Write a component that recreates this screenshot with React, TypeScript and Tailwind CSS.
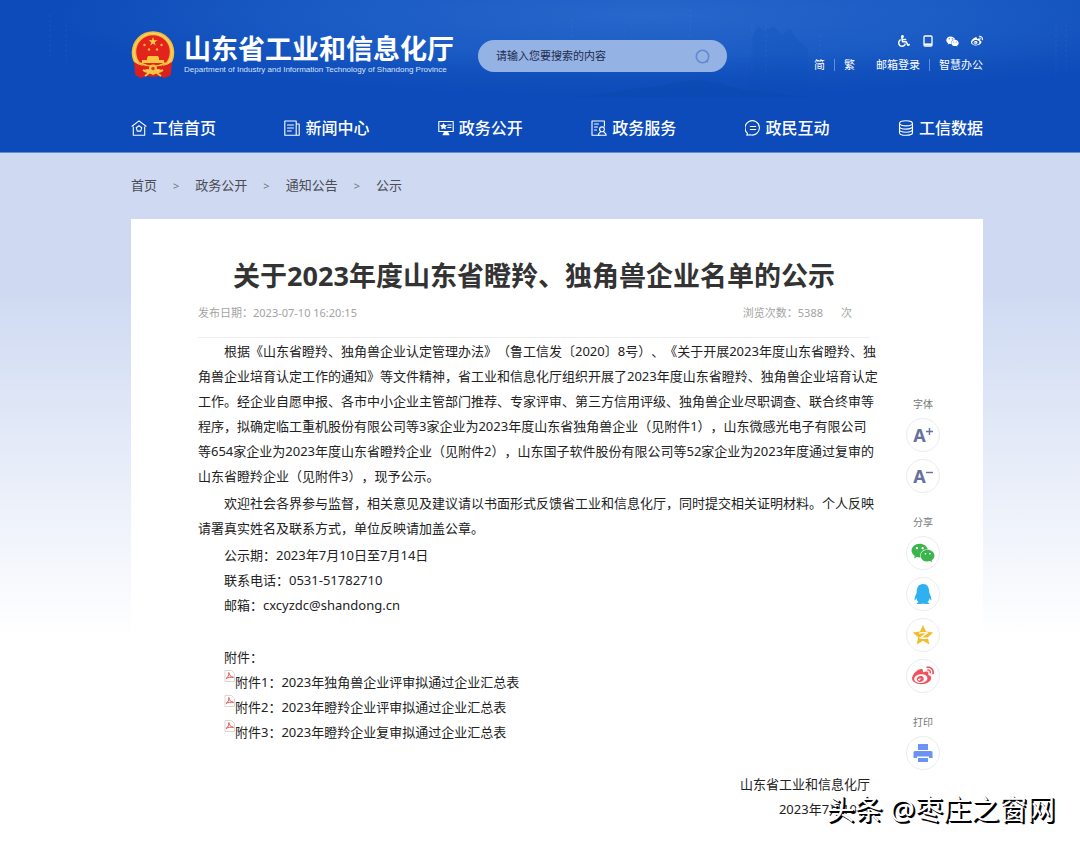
import type { ReactNode } from 'react';
import { FaWeixin, FaWheelchair, FaWeibo, FaQq } from 'react-icons/fa';

const line = { fill: 'none', stroke: 'currentColor', strokeWidth: 1.1, strokeLinejoin: 'round', strokeLinecap: 'round' } as const;

const navItems: { label: string; icon: ReactNode }[] = [
  {
    label: '工信首页',
    icon: (
      <>
        <path d="M1 6.2 8 .9l7 5.3M2.3 7v8.3h11.4V7" />
        <path d="m8 5.7 2.8 2-1.1 3.4H6.3L5.2 7.7z" />
      </>
    ),
  },
  {
    label: '新闻中心',
    icon: (
      <>
        <path d="M.8 1h11.4v14.2H.8zM12.2 4h3v11.2h-3" />
        <path d="M3.5 5h6M3.5 8h6M3.5 11h3.8" />
      </>
    ),
  },
  {
    label: '政务公开',
    icon: (
      <>
        <path d="M.8 1.5h14.4v10H.8zM9.8 5H13M9.8 7.5H13M5 14.7h6" />
        <path d="M6.5 12h3l1 2.5h-5zM5.5 3.8l.8 1.6 1.8.2-1.3 1.2.4 1.8-1.7-.9-1.6.9.3-1.8-1.3-1.2 1.8-.2z" fill="currentColor" />
      </>
    ),
  },
  {
    label: '政务服务',
    icon: (
      <>
        <path d="M8 15.2H1V1h12.4v5.3M3.5 4h4M3.5 7h3M3.5 10h2" />
        <circle cx="11" cy="9.3" r="2.4" />
        <path d="M9.6 11.3c0 1.6-2.2 1.2-2.2 3.9h7.8c0-2.7-2.6-2.3-2.6-3.9" />
      </>
    ),
  },
  {
    label: '政民互动',
    icon: (
      <>
        <path d="M2.5 13.3A7.2 7.2 0 1 1 5 14.7L1.8 15.2z" />
        <path d="M5.3 6.5h5.4M5.3 9.5h5.4" />
      </>
    ),
  },
  {
    label: '工信数据',
    icon: (
      <>
        <ellipse cx="8" cy="3.3" rx="6.5" ry="2.6" />
        <path d="M1.5 3.3v9.4c0 1.5 3 2.6 6.5 2.6s6.5-1.1 6.5-2.6V3.3M1.5 6.5c0 1.5 3 2.6 6.5 2.6s6.5-1.1 6.5-2.6M1.5 9.6c0 1.5 3 2.6 6.5 2.6s6.5-1.1 6.5-2.6" />
      </>
    ),
  },
];

const crumbs = ['首页', '政务公开', '通知公告', '公示'];

const attachments = [
  '附件1：2023年独角兽企业评审拟通过企业汇总表',
  '附件2：2023年瞪羚企业评审拟通过企业汇总表',
  '附件3：2023年瞪羚企业复审拟通过企业汇总表',
];

function Emblem() {
  return (
    <svg viewBox="0 0 44 47" className="h-[47px] w-11 shrink-0" aria-hidden="true">
      <path d="M6 32 4 44l6 3 6-2 6 1 6-1 6 2 6-3-2-12z" fill="#d9201c" />
      <circle cx="22" cy="21.5" r="21.3" fill="#f6bd3d" />
      <circle cx="22" cy="21.5" r="19" fill="none" stroke="#fbd978" strokeWidth="1" />
      <circle cx="22" cy="21" r="16.8" fill="#e3241d" />
      <path d="m22 6 1.1 3.2h3.3l-2.7 2 1 3.2-2.7-1.9-2.7 1.900 1-3.200-2.700-2h3.300z" fill="#fbd13f" />
      <g fill="#fbb83a">
        <circle cx="13.5" cy="14" r="1.2" />
        <circle cx="30.5" cy="14" r="1.2" />
        <circle cx="18" cy="18.5" r="1.2" />
        <circle cx="26" cy="18.5" r="1.2" />
      </g>
      <path d="M17 25h10l1 2v2h5v3H11v-3h5v-2z" fill="#fbc540" />
      <path d="M3 31c6 4 12 5 19 5s13-1 19-5l-1 11-7-2-5-2H16l-5 2-7 2z" fill="#dd211c" />
      <path d="M9 32c8 4 18 4 26 0" fill="none" stroke="#f9c644" strokeWidth="1.6" />
      <circle cx="22" cy="37.5" r="4" fill="#f6c245" />
      <circle cx="22" cy="37.5" r="1.7" fill="#de3a1e" />
      <path d="m12 39 6 2 4 2 4-2 6-2M14 45l4-3M30 45l-4-3" fill="none" stroke="#f9c644" strokeWidth="1.8" />
    </svg>
  );
}

function HeaderBackdrop() {
  return (
    <svg className="absolute inset-0 h-full w-full" viewBox="0 0 1080 153" preserveAspectRatio="none" aria-hidden="true">
      <defs>
        <radialGradient id="glow" cx="0.6" cy="0.1" r="0.55">
          <stop offset="0" stopColor="#2868cb" />
          <stop offset="0.5" stopColor="#1f60c8" stopOpacity="0.8" />
          <stop offset="1" stopColor="#2565c9" stopOpacity="0" />
        </radialGradient>
        <linearGradient id="fade" x1="0" y1="0" x2="0" y2="1">
          <stop offset="0.35" stopColor="#0c4bb9" stopOpacity="0" />
          <stop offset="0.7" stopColor="#0c4bb9" />
        </linearGradient>
      </defs>
      <rect width="1080" height="153" fill="url(#glow)" />
      <path d="M748 92l4-55 6-10 6 4 10-4 8 8 8-6 8 12 10 8v43z" fill="#0d4fb8" opacity="0.25" />
      <g stroke="#6aa2ea" strokeWidth="1" strokeDasharray="2 3" opacity="0.16">
        <path d="M572 20v50M624 30v55M690 10v60M752 25v55M766 25v55M820 35v45M1056 25v60M1066 25v60M50 15v45M66 25v40" />
      </g>
      <rect width="1080" height="153" fill="url(#fade)" />
      <path d="M570 98c30-2 60-10 80-10 20-2 30-8 50-7 20 0 25 8 50 10 20 2 40 5 60 7z" fill="#0a47ad" opacity="0.45" />
    </svg>
  );
}

function PdfIcon() {
  return (
    <svg viewBox="0 0 11 12" className="h-3 w-[11px] shrink-0" aria-hidden="true">
      <path d="M1 .5h6.5l3 3v8H1z" fill="#fff" stroke="#d5c9c9" strokeWidth="0.8" />
      <path d="M2 8.5c2.5-1.5 3-4 2.8-6 .5 3 2 4.5 4.7 4.8-3-.3-5.5 0-7.5 1.2z" fill="none" stroke="#e04848" strokeWidth="0.9" />
    </svg>
  );
}

function QzoneIcon() {
  return (
    <svg viewBox="0 0 22 22" className="h-[22px] w-[22px]" aria-hidden="true">
      <path d="m11 1 3 6.6 7.2.8-5.4 4.9 1.5 7.1-6.3-3.6-6.3 3.6 1.5-7.1L.8 8.4 8 7.6z" fill="#f2bd2c" />
      <path d="M7 9.3c2.5-.8 5-.9 8-.3l-6.5 4.7c3 .8 5.5.8 8.5.2" fill="none" stroke="#fff" strokeWidth="1.4" />
    </svg>
  );
}

function PrintIcon() {
  return (
    <svg viewBox="0 0 20 20" className="h-5 w-5" fill="#6a93f3" aria-hidden="true">
      <path d="M5 1h10v6H5zM2 8h16a1.500 1.500 0 0 1 1.500 1.500V15h-3.500v-1.500H4V15H.5V9.500A1.500 1.500 0 0 1 2 8zM5 15h10v4H5z" />
    </svg>
  );
}

function LetterIcon({ minus = false }: { minus?: boolean }) {
  return (
    <span className="flex items-start text-[18px] leading-5 font-bold text-[#66719c]">
      A
      <svg viewBox="0 0 8 8" className="mt-[3px] h-[7px] w-[7px]" stroke="currentColor" strokeWidth="1.6" aria-hidden="true">
        <path d={minus ? 'M0 4h8' : 'M0 4h8M4 0v8'} />
      </svg>
    </span>
  );
}

const toolGroups: { title: string; tools: { label: string; icon: ReactNode }[] }[] = [
  {
    title: '字体',
    tools: [
      { label: '放大字体', icon: <LetterIcon /> },
      { label: '缩小字体', icon: <LetterIcon minus /> },
    ],
  },
  {
    title: '分享',
    tools: [
      { label: '微信', icon: <FaWeixin className="h-6 w-6 text-[#3cb64c]" /> },
      { label: 'QQ', icon: <FaQq className="h-5 w-5 text-[#2fb0f0]" /> },
      { label: 'QQ空间', icon: <QzoneIcon /> },
      { label: '微博', icon: <FaWeibo className="h-[22px] w-[22px] text-[#f2505c]" /> },
    ],
  },
  { title: '打印', tools: [{ label: '打印', icon: <PrintIcon /> }] },
];

function Header() {
  return (
    <header className="relative border-b border-[#5f8ed8] bg-[#0c4bb9] text-white">
      <HeaderBackdrop />
      <div className="relative pr-[97px] pl-[131px]">
        <div className="flex h-[103px] items-start pt-[31px]">
          <Emblem />
          <div className="ml-[9px] shrink-0 pt-px">
            <div className="text-[27px] leading-[34px] font-bold whitespace-nowrap">山东省工业和信息化厅</div>
            <div className="font-['Liberation_Sans',sans-serif] text-[8px] leading-[8px] whitespace-nowrap text-[#d5e3fa]">
              Department of Industry and Information Technology of Shandong Province
            </div>
          </div>
          <form className="mt-[9px] ml-6 flex h-8 w-[249px] items-center rounded-full bg-[#95b2e4] pr-[17px] pl-[18px]">
            <input
              type="text"
              aria-label="搜索"
              placeholder="请输入您要搜索的内容"
              className="min-w-0 flex-1 bg-transparent text-[11px] text-[#1c2b4d] outline-none placeholder:text-[#1c2b4d]"
            />
            <button type="button" aria-label="搜索" className="text-[#5f8ad2]">
              <svg viewBox="0 0 15 15" className="h-[15px] w-[15px]" fill="none" stroke="currentColor" strokeWidth="1.6">
                <circle cx="7.5" cy="7.5" r="6.2" />
                <path d="m11.5 11.5 1.6 1.6" />
              </svg>
            </button>
          </form>
          <div className="ml-auto flex flex-col items-end">
            <div className="mt-1 flex h-3 items-center gap-3">
              <a href="#" aria-label="无障碍"><FaWheelchair className="h-3 w-3" /></a>
              <a href="#" aria-label="手机版">
                <svg viewBox="0 0 12 12" className="h-3 w-3" fill="none" stroke="currentColor" strokeWidth="1.3">
                  <rect x="2" y="1" width="8" height="10" rx="1" />
                  <path d="M2 9.3h8" strokeWidth="1.8" />
                </svg>
              </a>
              <a href="#" aria-label="微信"><FaWeixin className="h-[13px] w-[13px]" /></a>
              <a href="#" aria-label="微博"><FaWeibo className="h-3 w-3" /></a>
            </div>
            <div className="mt-2 flex items-center text-[11px] leading-5 whitespace-nowrap">
              <a href="#">简</a>
              <span className="mx-[9px] h-3 w-px bg-[#5b8fdf]" />
              <a href="#">繁</a>
              <a href="#" className="ml-[21px]">邮箱登录</a>
              <span className="mx-[9px] h-3 w-px bg-[#5b8fdf]" />
              <a href="#">智慧办公</a>
            </div>
          </div>
        </div>
        <nav className="flex h-[49px] items-center justify-between">
          {navItems.map((item) => (
            <a key={item.label} href="#" className="flex items-center gap-[5px] text-[16px] leading-6 font-medium whitespace-nowrap">
              <svg viewBox="0 0 16 16" className="h-4 w-4" {...line} aria-hidden="true">{item.icon}</svg>
              {item.label}
            </a>
          ))}
        </nav>
      </div>
    </header>
  );
}

function SideTools() {
  return (
    <aside className="flex w-[34px] shrink-0 flex-col gap-[22px] pt-[178px]">
      {toolGroups.map((group) => (
        <div key={group.title} className="flex flex-col items-center gap-[7px]">
          <div className="text-[10px] leading-[14px] text-[#777]">{group.title}</div>
          {group.tools.map((tool) => (
            <button
              key={tool.label}
              type="button"
              aria-label={tool.label}
              className="flex h-[34px] w-[34px] items-center justify-center rounded-full border border-[#ececf2] bg-white"
            >
              {tool.icon}
            </button>
          ))}
        </div>
      ))}
    </aside>
  );
}

export default function App() {
  return (
    <div className="relative min-h-screen overflow-hidden bg-white font-['Noto_Sans','Noto_Sans_CJK_SC',sans-serif] [text-spacing-trim:space-all]">
      <Header />
      <main className="bg-linear-to-b from-[#cfdaf2] from-20% to-white to-70% pr-[97px] pl-[131px]">
        {/* Breadcrumb */}
        <nav className="flex h-[66px] items-center gap-4 text-[13px] text-[#4a4d55]">
          {crumbs.map((crumb, i) => (
            <div key={crumb} className="flex items-center gap-4">
              {i > 0 && <span className="text-[11px] text-[#777]">&gt;</span>}
              <a href="#">{crumb}</a>
            </div>
          ))}
        </nav>

        <div className="flex bg-white pr-[43px] pl-[67px]">
          <article className="mr-9 min-w-0 flex-1 pt-[37px] pb-6 text-[#222]">
            <h1 className="text-center text-[27px] leading-10 font-bold whitespace-nowrap text-[#333]">
              关于2023年度山东省瞪羚、独角兽企业名单的公示
            </h1>
            <div className="flex h-[42px] items-start justify-between border-b border-[#eee] pt-[7px] pr-[18px] text-[11px] leading-5 text-[#a3a3a3]">
              <span>发布日期：2023-07-10 16:20:15</span>
              <span className="flex">
                <span>浏览次数：</span>
                <span className="mr-[18px]">5388</span>
                <span>次</span>
              </span>
            </div>

            {/* Notice body */}
            <div className="mt-px -mr-[9px] flex flex-col gap-[2px] text-[13px] leading-[25px]">
              <p className="indent-[2em]">
                根据《山东省瞪羚、独角兽企业认定管理办法》（鲁工信发〔2020〕8号）、《关于开展2023年度山东省瞪羚、独角兽企业培育认定工作的通知》等文件精神，省工业和信息化厅组织开展了2023年度山东省瞪羚、独角兽企业培育认定工作。经企业自愿申报、各市中小企业主管部门推荐、专家评审、第三方信用评级、独角兽企业尽职调查、联合终审等程序，拟确定临工重机股份有限公司等3家企业为2023年度山东省独角兽企业（见附件1），山东微感光电子有限公司等654家企业为2023年度山东省瞪羚企业（见附件2），山东国子软件股份有限公司等52家企业为2023年度通过复审的山东省瞪羚企业（见附件3），现予公示。
              </p>
              <p className="indent-[2em]">
                欢迎社会各界参与监督，相关意见及建议请以书面形式反馈省工业和信息化厅，同时提交相关证明材料。个人反映请署真实姓名及联系方式，单位反映请加盖公章。
              </p>
              <div className="pl-[26px]">
                <p>公示期：2023年7月10日至7月14日</p>
                <p>联系电话：0531-51782710</p>
                <p>邮箱：cxcyzdc@shandong.cn</p>
              </div>
              <div className="pt-[25px] pl-[26px]">
                <p>附件：</p>
                {attachments.map((name) => (
                  <a key={name} href="#" className="flex items-start">
                    <PdfIcon />
                    {name}
                  </a>
                ))}
              </div>
              <div className="pt-[25px] pr-[9px] text-right">
                <p>山东省工业和信息化厅</p>
                <p>2023年7月10日</p>
              </div>
            </div>
          </article>
          <SideTools />
        </div>
      </main>

      {/* Account watermark over the page */}
      <div className="absolute right-[25px] bottom-[18px] text-[28px] leading-10 whitespace-nowrap text-white [text-shadow:1px_1px_0_#000,2px_2px_0_#000]">
        头条 @枣庄之窗网
      </div>
    </div>
  );
}
